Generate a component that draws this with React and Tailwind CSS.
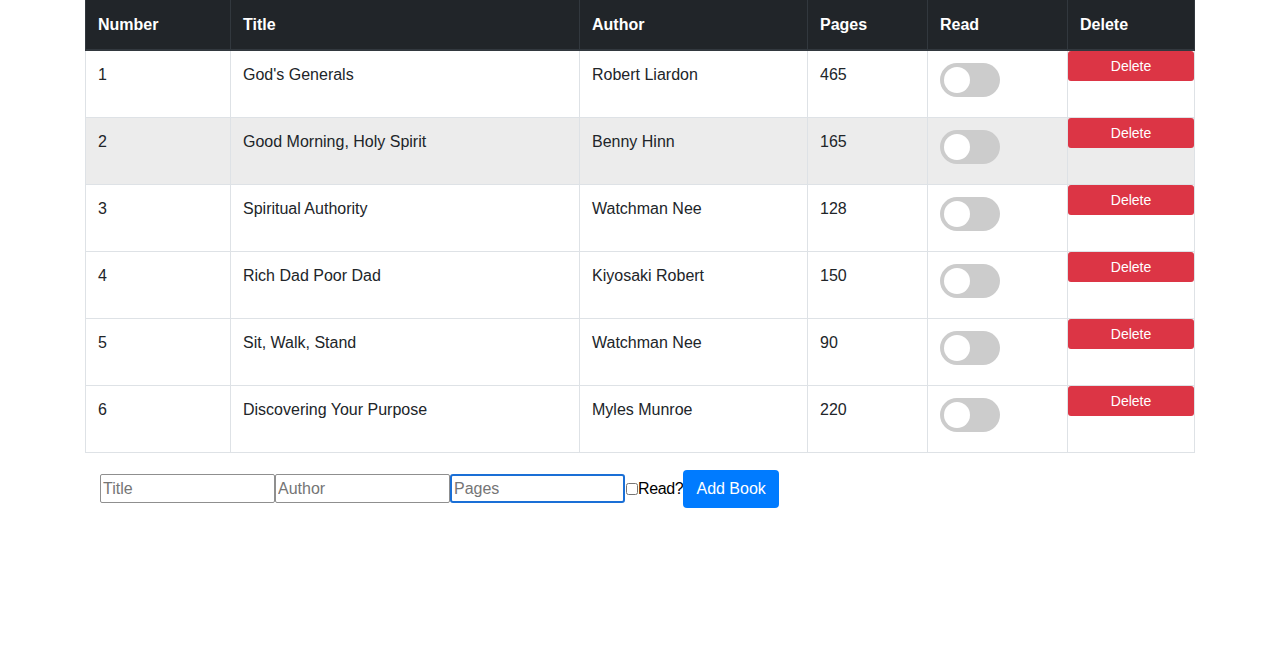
import React, { useState } from 'react'

const initialBooks = [
  { id: 1, title: "God's Generals", author: 'Robert Liardon', pages: 465, read: false },
  { id: 2, title: 'Good Morning, Holy Spirit', author: 'Benny Hinn', pages: 165, read: false },
  { id: 3, title: 'Spiritual Authority', author: 'Watchman Nee', pages: 128, read: false },
  { id: 4, title: 'Rich Dad Poor Dad', author: 'Kiyosaki Robert', pages: 150, read: false },
  { id: 5, title: 'Sit, Walk, Stand', author: 'Watchman Nee', pages: 90, read: false },
  { id: 6, title: 'Discovering Your Purpose', author: 'Myles Munroe', pages: 220, read: false }
]

const Toggle = ({ checked, onChange }) => (
  <button
    type="button"
    onClick={onChange}
    className={`relative block w-[60px] h-[34px] rounded-full transition-colors ${checked ? 'bg-[#2196f3]' : 'bg-[#cccccc]'}`}
  >
    <span
      className={`absolute top-[4px] left-[4px] w-[26px] h-[26px] rounded-full bg-white transition-transform ${checked ? 'translate-x-[26px]' : ''}`}
    ></span>
  </button>
)

const App = () => {
  const [books, setBooks] = useState(initialBooks)
  const [form, setForm] = useState({ title: '', author: '', pages: '', read: false })

  const toggleRead = (id) => {
    setBooks(books.map((b) => (b.id === id ? { ...b, read: !b.read } : b)))
  }

  const removeBook = (id) => {
    setBooks(books.filter((b) => b.id !== id))
  }

  const handleSubmit = (e) => {
    e.preventDefault()
    if (!form.title) return
    setBooks([...books, { id: books.length + 1, ...form }])
    setForm({ title: '', author: '', pages: '', read: false })
  }

  const th = 'h-[50px] px-3 pt-px text-left align-middle font-bold border border-t-0 border-[#32383e] border-b-2'
  const td = 'h-[67px] px-3 pt-3 align-top border border-[#dee2e6]'

  return (
    <div className="min-h-screen bg-white text-[#212529] font-['Liberation_Sans',Arial,sans-serif] text-base">
      <table className="ml-[85px] w-[1109px] border-collapse table-fixed">
        <colgroup>
          <col className="w-[145px]" />
          <col className="w-[349px]" />
          <col className="w-[228px]" />
          <col className="w-[120px]" />
          <col className="w-[140px]" />
          <col className="w-[127px]" />
        </colgroup>
        <thead className="bg-[#212529] text-white">
          <tr>
            <th className={th}>Number</th>
            <th className={th}>Title</th>
            <th className={th}>Author</th>
            <th className={th}>Pages</th>
            <th className={th}>Read</th>
            <th className={th}>Delete</th>
          </tr>
        </thead>
        <tbody>
          {books.map((book, i) => (
            <tr key={book.id} className={i === 1 ? 'bg-[#ececec]' : 'bg-white'}>
              <td className={td}>{i + 1}</td>
              <td className={td}>{book.title}</td>
              <td className={td}>{book.author}</td>
              <td className={td}>{book.pages}</td>
              <td className={td}>
                <Toggle checked={book.read} onChange={() => toggleRead(book.id)} />
              </td>
              <td className="h-[67px] p-0 align-top border border-[#dee2e6]">
                <button
                  type="button"
                  onClick={() => removeBook(book.id)}
                  className="block w-full h-[30px] rounded-[3px] bg-[#dc3545] text-white text-sm"
                >
                  Delete
                </button>
              </td>
            </tr>
          ))}
        </tbody>
      </table>

      {/* Add book form */}
      <form onSubmit={handleSubmit} className="ml-[100px] mt-[17px] flex items-center">
        <input
          type="text"
          placeholder="Title"
          value={form.title}
          onChange={(e) => setForm({ ...form, title: e.target.value })}
          className="w-[175px] h-[29px] px-[2px] border border-[#8f8f8f] rounded-[2px] placeholder-[#757575] outline-none"
        />
        <input
          type="text"
          placeholder="Author"
          value={form.author}
          onChange={(e) => setForm({ ...form, author: e.target.value })}
          className="w-[175px] h-[29px] px-[2px] border border-[#8f8f8f] rounded-[2px] placeholder-[#757575] outline-none"
        />
        <input
          type="number"
          placeholder="Pages"
          value={form.pages}
          onChange={(e) => setForm({ ...form, pages: e.target.value })}
          className="w-[175px] h-[29px] px-[2px] border-2 border-[#1a6fd6] rounded-[3px] placeholder-[#757575] outline-none"
        />
        <input
          type="checkbox"
          checked={form.read}
          onChange={(e) => setForm({ ...form, read: e.target.checked })}
          className="ml-px w-[12px] h-[12px]"
        />
        <label className="text-base text-black tracking-[-0.4px]">Read?</label>
        <button
          type="submit"
          className="w-[96px] h-[38px] rounded-[4px] bg-[#007bff] text-white text-base"
        >
          Add Book
        </button>
      </form>
    </div>
  )
}

export default App
